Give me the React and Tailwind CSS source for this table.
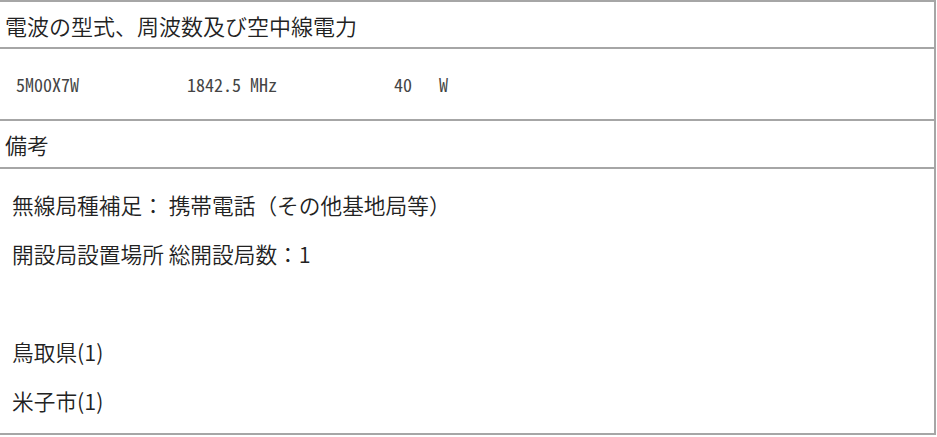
import React from "react";

const jp = { fontFamily: '"Noto Sans CJK JP", "Noto Sans", sans-serif' };

export default function App() {
  return (
    <div className="w-[937px] h-[437px] bg-white text-[#333]" style={jp}>
      <div className="w-[936px] border-t-2 border-r-2 border-[#a6a6a6]">
        <div className="h-[47px] flex items-center pl-[5px] text-[22px] leading-none font-[350] text-[#222] border-b-2 border-[#a6a6a6]">
          電波の型式、周波数及び空中線電力
        </div>
        <div className="h-[72px] flex items-center pl-[7px] border-b-2 border-[#a6a6a6]">
          <span
            className="whitespace-pre text-[18px] leading-none font-light text-[#444]"
            style={{ fontFamily: '"Noto Sans Mono CJK JP", "Liberation Mono", monospace' }}
          >
            {" 5M00X7W            1842.5 MHz             40   W"}
          </span>
        </div>
        <div className="h-[48px] flex items-center pl-[5px] text-[22px] leading-none font-[350] text-[#222] border-b-2 border-[#a6a6a6]">
          備考
        </div>
        <div className="h-[266px] pt-[12px] pl-[12px] text-[21.7px] font-[350] text-[#222] border-b-2 border-[#a6a6a6]">
          <div className="h-[49px] flex items-center whitespace-pre">無線局種補足： 携帯電話（その他基地局等）</div>
          <div className="h-[49px] flex items-center whitespace-pre">開設局設置場所 総開設局数：1</div>
          <div className="h-[49px]"></div>
          <div className="h-[49px] flex items-center">鳥取県(1)</div>
          <div className="h-[49px] flex items-center">米子市(1)</div>
        </div>
      </div>
    </div>
  );
}
